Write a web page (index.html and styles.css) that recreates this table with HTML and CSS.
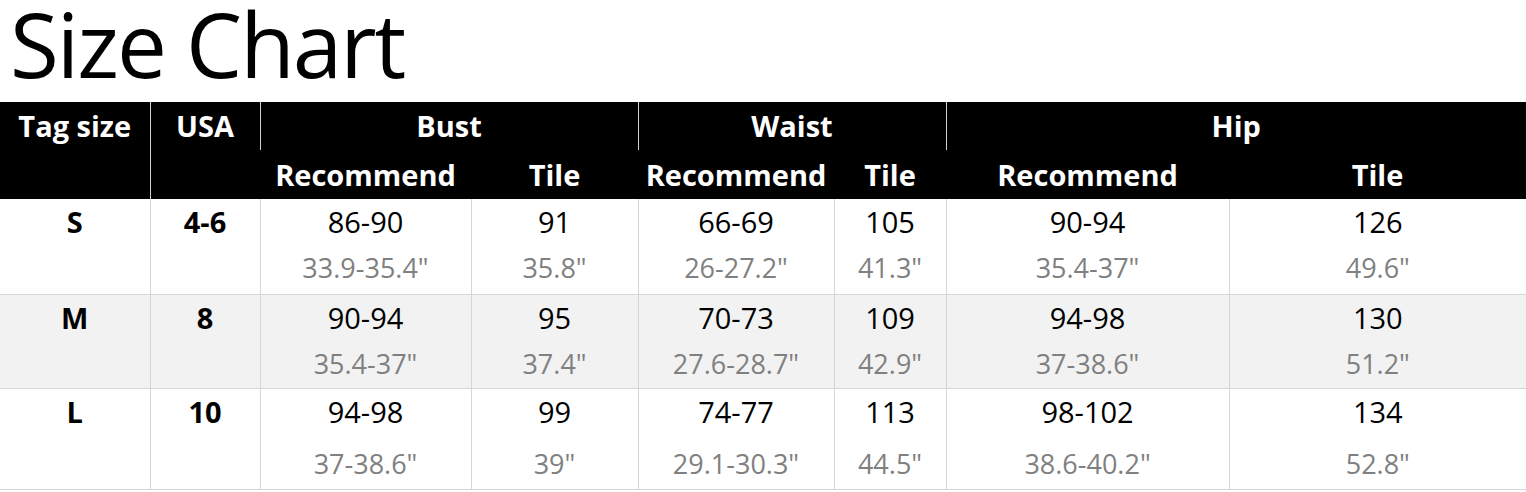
FILE: index.html
```html
<!DOCTYPE html>
<html lang="en">
<head>
<meta charset="utf-8">
<title>Size Chart</title>
<link rel="stylesheet" href="styles.css">
</head>
<body>
<h1 class="title">Size Chart</h1>
<table class="chart">
  <colgroup>
    <col class="c-tag"><col class="c-usa"><col class="c-bust-r"><col class="c-bust-t"><col class="c-waist-r"><col class="c-waist-t"><col class="c-hip-r"><col class="c-hip-t">
  </colgroup>
  <thead>
    <tr class="h1">
      <th rowspan="2" class="top">Tag size</th>
      <th rowspan="2" class="top">USA</th>
      <th colspan="2">Bust</th>
      <th colspan="2">Waist</th>
      <th colspan="2">Hip</th>
    </tr>
    <tr class="h2">
      <th class="nb">Recommend</th><th class="nb">Tile</th>
      <th class="nb">Recommend</th><th class="nb">Tile</th>
      <th class="nb">Recommend</th><th class="nb">Tile</th>
    </tr>
  </thead>
  <tbody>
    <tr class="row row-s">
      <td class="key"><div class="v">S</div></td>
      <td class="key"><div class="v">4-6</div></td>
      <td><div class="v">86-90</div><div class="sub">33.9-35.4"</div></td>
      <td><div class="v">91</div><div class="sub">35.8"</div></td>
      <td><div class="v">66-69</div><div class="sub">26-27.2"</div></td>
      <td><div class="v">105</div><div class="sub">41.3"</div></td>
      <td><div class="v">90-94</div><div class="sub">35.4-37"</div></td>
      <td><div class="v">126</div><div class="sub">49.6"</div></td>
    </tr>
    <tr class="row row-m">
      <td class="key"><div class="v">M</div></td>
      <td class="key"><div class="v">8</div></td>
      <td><div class="v">90-94</div><div class="sub">35.4-37"</div></td>
      <td><div class="v">95</div><div class="sub">37.4"</div></td>
      <td><div class="v">70-73</div><div class="sub">27.6-28.7"</div></td>
      <td><div class="v">109</div><div class="sub">42.9"</div></td>
      <td><div class="v">94-98</div><div class="sub">37-38.6"</div></td>
      <td><div class="v">130</div><div class="sub">51.2"</div></td>
    </tr>
    <tr class="row row-l">
      <td class="key"><div class="v">L</div></td>
      <td class="key"><div class="v">10</div></td>
      <td><div class="v">94-98</div><div class="sub">37-38.6"</div></td>
      <td><div class="v">99</div><div class="sub">39"</div></td>
      <td><div class="v">74-77</div><div class="sub">29.1-30.3"</div></td>
      <td><div class="v">113</div><div class="sub">44.5"</div></td>
      <td><div class="v">98-102</div><div class="sub">38.6-40.2"</div></td>
      <td><div class="v">134</div><div class="sub">52.8"</div></td>
    </tr>
  </tbody>
</table>
</body>
</html>
```

FILE: styles.css
```css
html, body {
  margin: 0;
  padding: 0;
  background: #ffffff;
}

body {
  font-family: "Open Sans", "Noto Sans", "Liberation Sans", sans-serif;
  color: #000;
  width: 1526px;
  overflow: hidden;
}

.title {
  margin: -17px 0 0;
  height: 119px;
  padding-left: 10px;
  font-size: 89px;
  font-weight: 400;
  line-height: 121px;
  letter-spacing: -2px;
}

.chart {
  border-collapse: collapse;
  table-layout: fixed;
  width: 1526px;
}

.c-tag { width: 150px; }
.c-usa { width: 110px; }
.c-bust-r { width: 211px; }
.c-bust-t { width: 167px; }
.c-waist-r { width: 196px; }
.c-waist-t { width: 112px; }
.c-hip-r { width: 283px; }
.c-hip-t { width: 297px; }

.chart th {
  background: #000;
  color: #fff;
  font-size: 29px;
  font-weight: 700;
  padding: 0;
  text-align: center;
  border-left: 1px solid #cfcfcf;
}

.chart th:first-child { border-left: none; }

.chart th.nb { border-left: none; }

.chart th.top { vertical-align: top; }

.h1 th {
  height: 48px;
  line-height: 48px;
}

.h2 th {
  height: 49px;
  line-height: 49px;
}

.chart td {
  padding: 0;
  text-align: center;
  vertical-align: top;
  border-left: 1px solid #d6d6d6;
  border-bottom: 1px solid #d6d6d6;
}

.chart td:first-child { border-left: none; }

.row-s td { height: 95px; }
.row-m td { height: 93px; }
.row-l td { height: 100px; }

.row-m td { background: #f2f2f2; }

.v {
  font-size: 29px;
  line-height: 44px;
  padding-top: 1px;
}

.key .v { font-weight: 700; }

.sub {
  font-size: 27px;
  line-height: 44px;
  margin-top: 2px;
  color: #808080;
}

.row-l .sub { margin-top: 8px; }
```
